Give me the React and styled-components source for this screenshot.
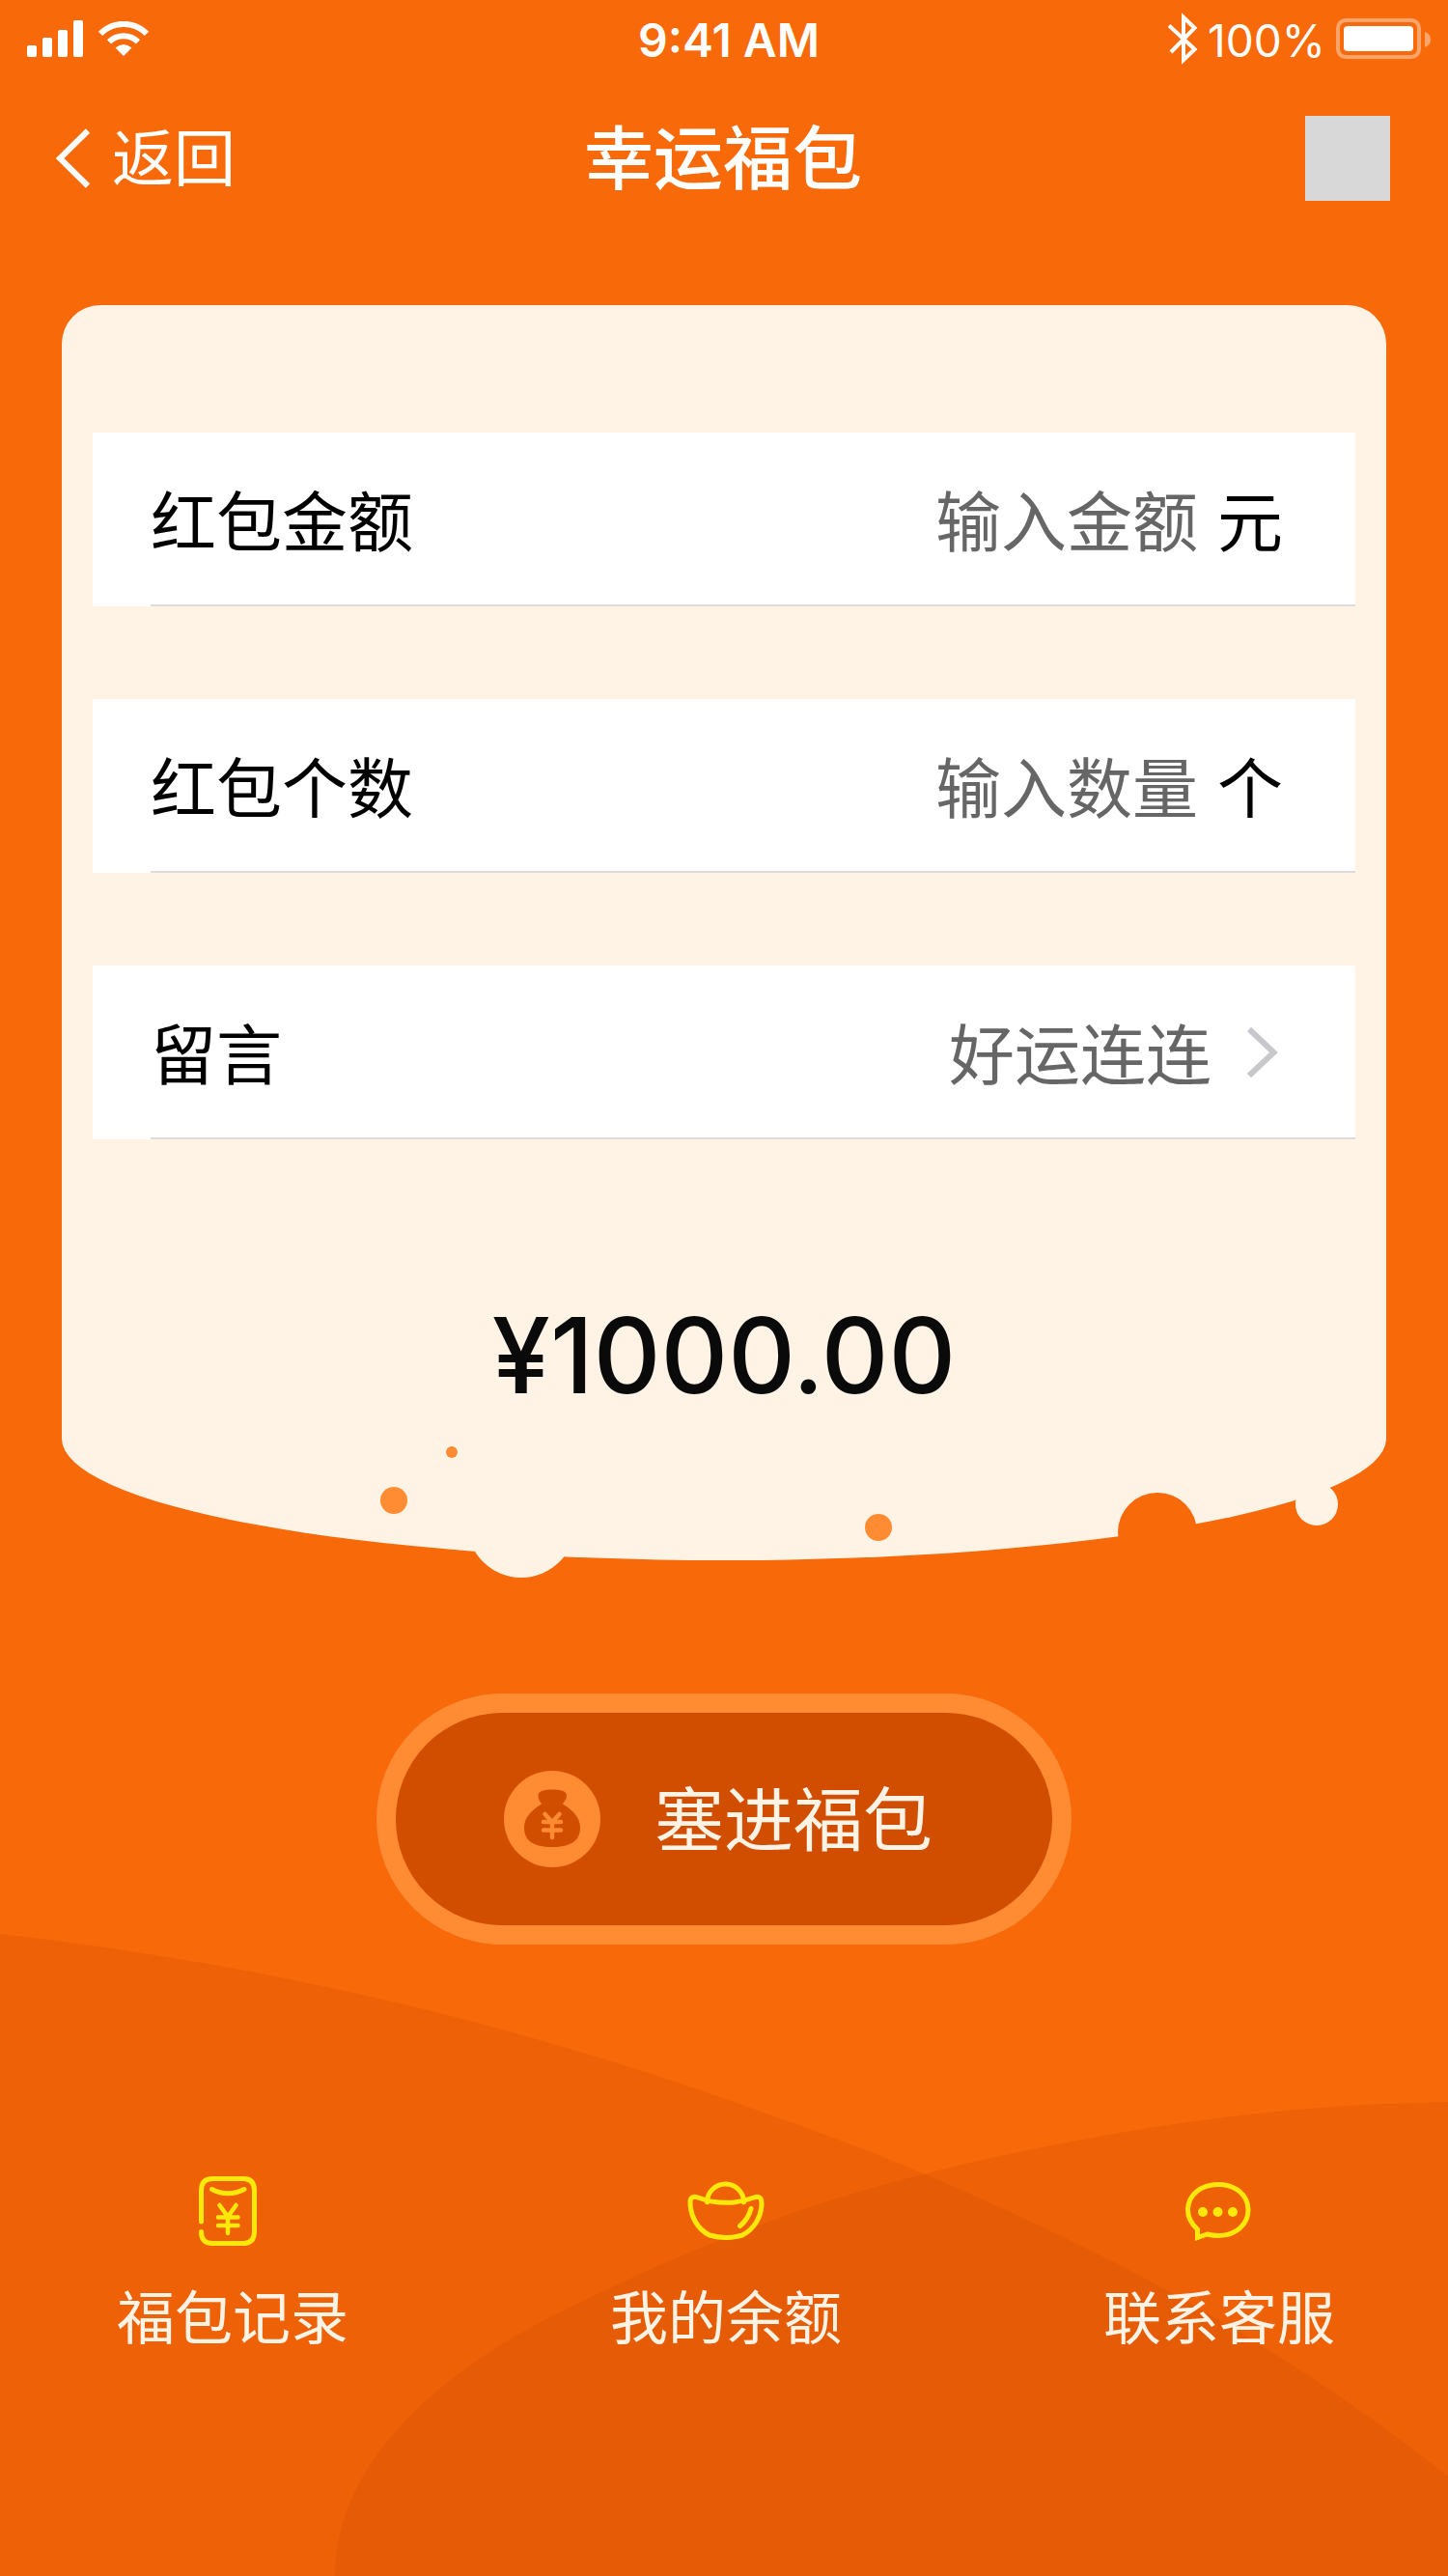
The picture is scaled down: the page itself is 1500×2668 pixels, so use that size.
import React from "react";
import styled, { createGlobalStyle } from "styled-components";

const color = {
  page: "#f8690a",
  cream: "#fff3e5",
  button: "#d14d00",
  light: "#ff8c33",
  yellow: "#ffe80a",
  muted: "#666666",
  line: "#dcdcdc",
};

const latin = `Inter, "Noto Sans CJK SC", sans-serif`;

const GlobalStyle = createGlobalStyle`
  *, *::before, *::after { box-sizing: border-box; }
  body {
    margin: 0;
    background: ${color.page};
    font-family: "Noto Sans CJK SC", sans-serif;
  }
  button, input { font: inherit; color: inherit; border: 0; padding: 0; margin: 0; background: none; border-radius: 0; }
  button { cursor: pointer; }
  svg { display: block; flex: none; }
`;

const Page = styled.div`
  position: relative;
  z-index: 0;
  min-height: 100vh;
  display: flex;
  flex-direction: column;
  overflow: hidden;
`;

const Waves = styled.svg`
  position: absolute;
  z-index: -1;
  left: 0;
  bottom: 0;
  width: 100%;
  height: 668px;
`;

const StatusBar = styled.div`
  display: grid;
  grid-template-columns: 1fr auto 1fr;
  align-items: center;
  height: 80px;
  padding: 0 18px 0 28px;
  color: #fff;
  font-family: ${latin};
  font-size: 48px;
  line-height: 76px;
`;

const StatusGroup = styled.div`
  display: flex;
  align-items: center;
  gap: ${(p) => p.$gap}px;
  justify-content: ${(p) => (p.$end ? "flex-end" : "flex-start")};
`;

const Clock = styled.time`
  font-weight: 600;
  padding-top: 4px;
`;

const BatteryLevel = styled.span`
  font-size: 46px;
  padding-top: 4px;
`;

const NavBar = styled.header`
  display: grid;
  grid-template-columns: 1fr auto 1fr;
  align-items: center;
  height: 168px;
  padding: 0 60px 0 58px;
  color: #fff;
`;

const BackLink = styled.a`
  display: flex;
  align-items: center;
  gap: 22px;
  justify-self: start;
  color: inherit;
  text-decoration: none;
  font-size: 64px;
  line-height: 88px;
`;

const CapText = styled.span`
  display: block;
  padding-bottom: ${(p) => p.$lift}px;
`;

const Title = styled.h1`
  margin: 0;
  padding-bottom: 10px;
  font-size: 72px;
  line-height: 88px;
  font-weight: 500;
`;

const MenuButton = styled.button`
  justify-self: end;
  width: 88px;
  height: 88px;
  background: #d8d8d8;
`;

const Card = styled.form`
  position: relative;
  margin: 68px 64px 0;
  padding: 132px 32px;
  background: ${color.cream};
  border-radius: 40px 40px 50% 50% / 40px 40px 126px 126px;
`;

const Bubbles = styled.svg`
  position: absolute;
  left: 0;
  bottom: -20px;
  width: 100%;
  height: 150px;
`;

const Rows = styled.div`
  display: flex;
  flex-direction: column;
  gap: 96px;
`;

const Row = styled.div`
  padding-left: 60px;
  background: #fff;
  color: #000;
  font-size: 68px;
  line-height: 96px;
`;

const RowBody = styled.div`
  display: flex;
  align-items: center;
  height: 180px;
  padding-right: 75px;
  border-bottom: 2px solid ${color.line};
`;

const FieldInput = styled.input`
  flex: 1;
  min-width: 0;
  height: 96px;
  margin-right: 20px;
  text-align: right;
  outline: none;
  &::placeholder { color: ${color.muted}; opacity: 1; }
`;

const PickerButton = styled.button`
  flex: 1;
  display: flex;
  align-items: center;
  justify-content: flex-end;
  gap: 37px;
  padding-right: 5px;
  color: ${color.muted};
`;

const Amount = styled.output`
  display: block;
  margin-top: 144px;
  text-align: center;
  color: #0a0a0a;
  font-family: ${latin};
  font-size: 108px;
  line-height: 160px;
  font-weight: 500;
`;

const SubmitButton = styled.button`
  align-self: center;
  display: flex;
  align-items: center;
  gap: 56px;
  width: 720px;
  height: 260px;
  margin-top: 138px;
  padding-left: 112px;
  border: 20px solid ${color.light};
  border-radius: 130px;
  background: ${color.button};
  color: ${color.cream};
  font-size: 72px;
  line-height: 96px;
`;

const Shortcuts = styled.nav`
  display: flex;
  justify-content: space-between;
  margin-top: 240px;
  padding: 0 117px 0 121px;
`;

const Shortcut = styled.a`
  display: flex;
  flex-direction: column;
  align-items: center;
  gap: 29px;
  color: ${color.cream};
  text-decoration: none;
  font-size: 60px;
  line-height: 84px;
`;

const yellowStroke = {
  fill: "none",
  stroke: color.yellow,
  strokeWidth: 5,
  strokeLinecap: "round",
  strokeLinejoin: "round",
};

function SignalIcon() {
  return (
    <svg width="58" height="38" fill="#fff" aria-hidden="true">
      <rect x="0" y="26" width="10" height="12" rx="2" />
      <rect x="16" y="18" width="10" height="20" rx="2" />
      <rect x="32" y="10" width="10" height="28" rx="2" />
      <rect x="48" y="0" width="10" height="38" rx="2" />
    </svg>
  );
}

function WifiIcon() {
  return (
    <svg width="52" height="36" aria-hidden="true">
      <g fill="none" stroke="#fff" strokeWidth="6">
        <path d="M2 12.800A34 34 0 0 1 50 12.800" />
        <path d="M11 21.300A21.500 21.500 0 0 1 41 21.300" />
      </g>
      <path d="M17.500 27.500Q26 20.500 34.500 27.500L26 36Z" fill="#fff" />
    </svg>
  );
}

function BluetoothIcon() {
  return (
    <svg width="30" height="54" fill="none" stroke="#fff" aria-hidden="true">
      <path d="M1 13.500L27.500 38L16 49V5L27.500 16L3 41" strokeWidth="4" />
    </svg>
  );
}

function BatteryIcon() {
  return (
    <svg width="98" height="42" aria-hidden="true">
      <rect x="2" y="2" width="84" height="38" rx="8" fill="none" stroke="#fff" strokeOpacity=".4" strokeWidth="4" />
      <rect x="8" y="8" width="72" height="26" rx="4" fill="#fff" />
      <path d="M92 14Q98 16 98 22Q98 28 92 30Z" fill="#fff" fillOpacity=".4" />
    </svg>
  );
}

function BackIcon() {
  return (
    <svg width="36" height="62" fill="none" stroke="#fff" strokeWidth="6" aria-hidden="true">
      <path d="M33 2.500L4 31L33 59.500" />
    </svg>
  );
}

function ForwardIcon() {
  return (
    <svg width="32" height="54" fill="none" stroke="#c7c7cc" strokeWidth="6" aria-hidden="true">
      <path d="M2 4L27.500 28L2 52" />
    </svg>
  );
}

function BagIcon() {
  return (
    <svg width="100" height="100" aria-hidden="true">
      <circle cx="50" cy="50" r="50" fill={color.light} />
      <path
        fill={color.button}
        d="M50 19.500C58 19.500 65 21 65 25.500C65 30 62 32 61 34.500C72 41 79 49 79 59C79 72 70 79 50 79C30 79 21 72 21 59C21 49 28 41 39 34.500C38 32 35.500 30 35.500 25.500C35.500 21 42 19.500 50 19.500Z"
      />
      <g fill="none" stroke={color.light} strokeWidth="4.500" strokeLinecap="round" strokeLinejoin="round">
        <path d="M42.500 45L50 53L57.500 45M50 53V69M41 53H59M41 61.500H59" />
      </g>
    </svg>
  );
}

function EnvelopeIcon() {
  return (
    <svg width="80" height="72" viewBox="-5 0 80 72" aria-hidden="true" {...yellowStroke}>
      <path d="M2.500 47V15Q2.500 2.500 14 2.500H46Q57.500 2.500 57.500 15V57Q57.500 69.500 46 69.500H14Q2.500 69.500 2.500 57.500" />
      <path d="M13.500 13.500Q30 22 47 13.500" />
      <path d="M21.500 30L30 42L38.500 30M30 42V59M20 42.500H40.500M20 51H40.500" strokeWidth="4.500" />
    </svg>
  );
}

function IngotIcon() {
  return (
    <svg width="80" height="72" aria-hidden="true" {...yellowStroke}>
      <path d="M20.500 27A19 19 0 0 1 58.500 27" />
      <path d="M3 27C3 22 6 20 11 22C30 29 50 29 69 22C74 20 77 22 77 28C77 42 69 55 57 61Q40 66 23 61C11 55 3 42 3 27Z" />
      <path d="M66 33.500Q63 44.500 54.500 51.500" />
    </svg>
  );
}

function ChatIcon() {
  return (
    <svg width="80" height="72" viewBox="-5 0 80 72" aria-hidden="true">
      <path
        fill="none"
        stroke={color.yellow}
        strokeWidth="5"
        d="M12.500 63.500V55C6 49 2.500 43 2.500 35C2.500 19.500 16 8.500 34 8.500C52 8.500 65 19.500 65 35C65 50 52 61.500 34 61.500Q28 61.500 22.500 60Z"
      />
      <circle cx="18" cy="37" r="5" fill={color.yellow} />
      <circle cx="33.500" cy="37" r="5" fill={color.yellow} />
      <circle cx="49" cy="37" r="5" fill={color.yellow} />
    </svg>
  );
}

const fields = [
  { id: "amount", label: "红包金额", placeholder: "输入金额", unit: "元" },
  { id: "count", label: "红包个数", placeholder: "输入数量", unit: "个" },
];

const shortcuts = [
  { label: "福包记录", Icon: EnvelopeIcon },
  { label: "我的余额", Icon: IngotIcon },
  { label: "联系客服", Icon: ChatIcon },
];

export default function App() {
  return (
    <>
      <GlobalStyle />
      <Page>
        <Waves viewBox="0 0 1500 668" preserveAspectRatio="none" fill={color.button} fillOpacity=".26" aria-hidden="true">
          <path d="M0 3C300 37 570 105 824 200C850 209 875 218 900 228C970 256 1040 287 1110 321C1195 362 1275 408 1355 460C1405 493 1455 529 1500 565V668H0Z" />
          <path d="M347 668C347 560 440 460 600 385C700 336 800 296 900 267C970 247 1040 231 1110 218C1240 193 1370 179 1500 177V668Z" />
        </Waves>

        <StatusBar>
          <StatusGroup $gap={16}>
            <SignalIcon />
            <WifiIcon />
          </StatusGroup>
          <Clock>9:41 AM</Clock>
          <StatusGroup $gap={11} $end>
            <BluetoothIcon />
            <BatteryLevel>100%</BatteryLevel>
            <BatteryIcon />
          </StatusGroup>
        </StatusBar>

        <NavBar>
          <BackLink href="#back">
            <BackIcon />
            <CapText $lift={10}>返回</CapText>
          </BackLink>
          <Title>幸运福包</Title>
          <MenuButton type="button" aria-label="菜单" />
        </NavBar>

        <Card id="packet" onSubmit={(e) => e.preventDefault()}>
          <Rows>
            {fields.map((f) => (
              <Row key={f.id}>
                <RowBody>
                  <label htmlFor={f.id}>{f.label}</label>
                  <FieldInput id={f.id} type="text" inputMode="decimal" placeholder={f.placeholder} />
                  <span>{f.unit}</span>
                </RowBody>
              </Row>
            ))}
            <Row>
              <RowBody>
                <label htmlFor="message">留言</label>
                <PickerButton id="message" type="button">
                  好运连连
                  <ForwardIcon />
                </PickerButton>
              </RowBody>
            </Row>
          </Rows>
          <Amount>¥1000.00</Amount>
          <Bubbles viewBox="0 0 1372 150" aria-hidden="true">
            <g fill={color.light}>
              <circle cx="404" cy="18" r="6" />
              <circle cx="344" cy="68" r="14" />
              <circle cx="846" cy="96" r="14" />
            </g>
            <circle cx="476" cy="92" r="56" fill={color.cream} />
            <circle cx="1135" cy="101" r="41" fill={color.page} />
            <circle cx="1300" cy="72" r="22" fill={color.cream} />
          </Bubbles>
        </Card>

        <SubmitButton type="submit" form="packet">
          <BagIcon />
          <CapText $lift={8}>塞进福包</CapText>
        </SubmitButton>

        <Shortcuts>
          {shortcuts.map(({ label, Icon }) => (
            <Shortcut key={label} href="#more">
              <Icon />
              {label}
            </Shortcut>
          ))}
        </Shortcuts>
      </Page>
    </>
  );
}
